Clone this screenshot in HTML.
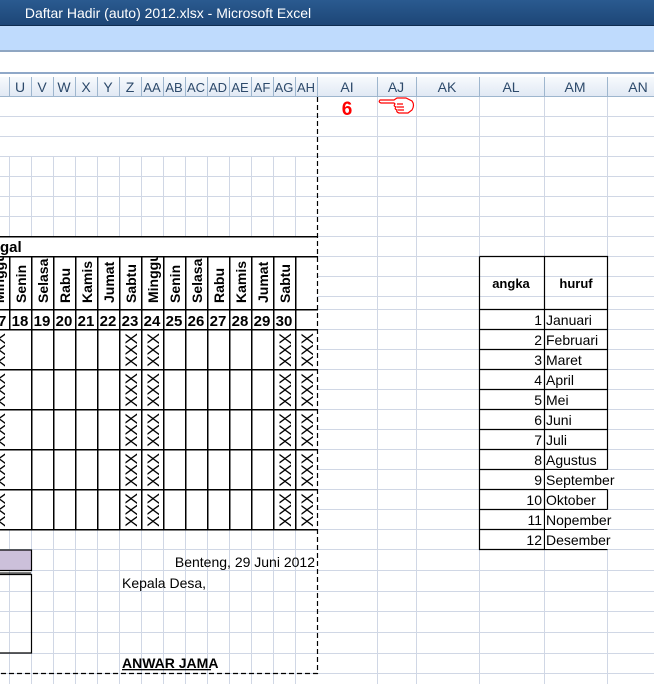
<!DOCTYPE html>
<html><head><meta charset="utf-8"><style>
html,body{margin:0;padding:0;width:654px;height:684px;overflow:hidden;background:#fff}
svg{display:block}
text{font-family:"Liberation Sans",sans-serif}
</style></head><body>
<svg width="654" height="684" viewBox="0 0 654 684" xmlns="http://www.w3.org/2000/svg">
<defs>
<linearGradient id="tb" x1="0" y1="0" x2="0" y2="1"><stop offset="0" stop-color="#2a5a90"/><stop offset="1" stop-color="#1d4677"/></linearGradient>
<linearGradient id="hd" x1="0" y1="0" x2="0" y2="1"><stop offset="0" stop-color="#f7fafd"/><stop offset="1" stop-color="#e1e9f4"/></linearGradient>
<clipPath id="hc"><rect x="0" y="257" width="317" height="52"/></clipPath>
</defs>
<rect x="0" y="0" width="654" height="25" fill="url(#tb)"/>
<text x="168" y="18" font-size="14" fill="#fff" text-anchor="middle">Daftar Hadir (auto) 2012.xlsx -  Microsoft Excel</text>
<rect x="0" y="25" width="654" height="1" fill="#0f2c50"/>
<rect x="0" y="26" width="654" height="24" fill="#bfdbfd"/>
<rect x="0" y="50" width="654" height="2" fill="#8fa6c2"/>
<rect x="0" y="72" width="654" height="2" fill="#8fa8c8"/>
<rect x="0" y="77" width="654" height="19" fill="url(#hd)"/>
<rect x="0" y="96" width="654" height="1" fill="#9eb6ce"/>
<g fill="#9eb6ce">
<rect x="9" y="77" width="1" height="19"/><rect x="31" y="77" width="1" height="19"/><rect x="53" y="77" width="1" height="19"/><rect x="75" y="77" width="1" height="19"/><rect x="97" y="77" width="1" height="19"/><rect x="119" y="77" width="1" height="19"/><rect x="141" y="77" width="1" height="19"/><rect x="163" y="77" width="1" height="19"/><rect x="185" y="77" width="1" height="19"/><rect x="207" y="77" width="1" height="19"/><rect x="229" y="77" width="1" height="19"/><rect x="251" y="77" width="1" height="19"/><rect x="273" y="77" width="1" height="19"/><rect x="295" y="77" width="1" height="19"/><rect x="317" y="77" width="1" height="19"/><rect x="377" y="77" width="1" height="19"/><rect x="416" y="77" width="1" height="19"/><rect x="479" y="77" width="1" height="19"/><rect x="544" y="77" width="1" height="19"/><rect x="607" y="77" width="1" height="19"/>
</g>
<g font-size="14" fill="#2d4a6b" text-anchor="middle">
<text x="20" y="92">U</text><text x="42" y="92">V</text><text x="64" y="92">W</text><text x="86" y="92">X</text><text x="108" y="92">Y</text><text x="130" y="92">Z</text><text x="152" y="92" font-size="13">AA</text><text x="174" y="92" font-size="13">AB</text><text x="196" y="92" font-size="13">AC</text><text x="218" y="92" font-size="13">AD</text><text x="240" y="92" font-size="13">AE</text><text x="262" y="92" font-size="13">AF</text><text x="284" y="92" font-size="13">AG</text><text x="306" y="92" font-size="13">AH</text><text x="347" y="92">AI</text><text x="396" y="92">AJ</text><text x="447" y="92">AK</text><text x="511" y="92">AL</text><text x="575" y="92">AM</text><text x="638" y="92">AN</text>
</g>
<g fill="#d0d7e5">
<rect x="0" y="116" width="654" height="1"/><rect x="0" y="136" width="654" height="1"/><rect x="0" y="156" width="654" height="1"/><rect x="0" y="176" width="654" height="1"/><rect x="0" y="196" width="654" height="1"/><rect x="0" y="216" width="654" height="1"/><rect x="0" y="236" width="654" height="1"/>
<rect x="317" y="256" width="337" height="1"/><rect x="317" y="276" width="337" height="1"/><rect x="317" y="296" width="337" height="1"/>
<rect x="317" y="309" width="337" height="1"/><rect x="317" y="329" width="337" height="1"/><rect x="317" y="349" width="337" height="1"/><rect x="317" y="369" width="337" height="1"/><rect x="317" y="389" width="337" height="1"/><rect x="317" y="409" width="337" height="1"/><rect x="317" y="429" width="337" height="1"/><rect x="317" y="449" width="337" height="1"/><rect x="317" y="469" width="337" height="1"/><rect x="317" y="489" width="337" height="1"/><rect x="317" y="509" width="337" height="1"/><rect x="317" y="529" width="337" height="1"/>
<rect x="0" y="549" width="654" height="1"/><rect x="0" y="570" width="654" height="1"/><rect x="0" y="591" width="654" height="1"/><rect x="0" y="611" width="654" height="1"/><rect x="0" y="632" width="654" height="1"/><rect x="0" y="653" width="654" height="1"/><rect x="0" y="673" width="654" height="1"/>
<rect x="9" y="156" width="1" height="80"/><rect x="31" y="156" width="1" height="80"/><rect x="53" y="156" width="1" height="80"/><rect x="75" y="156" width="1" height="80"/><rect x="97" y="156" width="1" height="80"/><rect x="119" y="156" width="1" height="80"/><rect x="141" y="156" width="1" height="80"/><rect x="163" y="156" width="1" height="80"/><rect x="185" y="156" width="1" height="80"/><rect x="207" y="156" width="1" height="80"/><rect x="229" y="156" width="1" height="80"/><rect x="251" y="156" width="1" height="80"/><rect x="273" y="156" width="1" height="80"/><rect x="295" y="156" width="1" height="80"/>
<rect x="9" y="529" width="1" height="155"/><rect x="31" y="529" width="1" height="155"/><rect x="53" y="529" width="1" height="155"/><rect x="75" y="529" width="1" height="155"/><rect x="97" y="529" width="1" height="155"/><rect x="119" y="529" width="1" height="155"/><rect x="141" y="529" width="1" height="155"/><rect x="163" y="529" width="1" height="155"/><rect x="185" y="529" width="1" height="155"/><rect x="207" y="529" width="1" height="155"/><rect x="229" y="529" width="1" height="155"/><rect x="251" y="529" width="1" height="155"/><rect x="273" y="529" width="1" height="155"/><rect x="295" y="529" width="1" height="155"/>
<rect x="377" y="97" width="1" height="587"/><rect x="416" y="97" width="1" height="587"/><rect x="479" y="97" width="1" height="587"/><rect x="544" y="97" width="1" height="587"/><rect x="607" y="97" width="1" height="587"/>
</g>
<g fill="#000">
<rect x="0" y="236" width="318" height="1.5"/>
<rect x="0" y="256" width="318" height="1.5"/>
<rect x="0" y="309" width="318" height="1.5"/>
<rect x="0" y="329" width="318" height="1.5"/>
<rect x="0" y="369" width="318" height="1.5"/>
<rect x="0" y="409" width="318" height="1.5"/>
<rect x="0" y="449" width="318" height="1.5"/>
<rect x="0" y="489" width="318" height="1.5"/>
<rect x="0" y="529" width="318" height="1.5"/>
<rect x="9" y="256" width="1.5" height="74"/>
<rect x="31" y="256" width="1.5" height="274"/><rect x="53" y="256" width="1.5" height="274"/><rect x="75" y="256" width="1.5" height="274"/><rect x="97" y="256" width="1.5" height="274"/><rect x="119" y="256" width="1.5" height="274"/><rect x="141" y="256" width="1.5" height="274"/><rect x="163" y="256" width="1.5" height="274"/><rect x="185" y="256" width="1.5" height="274"/><rect x="207" y="256" width="1.5" height="274"/><rect x="229" y="256" width="1.5" height="274"/><rect x="251" y="256" width="1.5" height="274"/><rect x="273" y="256" width="1.5" height="274"/><rect x="295" y="256" width="1.5" height="274"/>
</g>
<text x="0" y="252" font-size="15" font-weight="bold">gal</text>
<g clip-path="url(#hc)" font-size="14" font-weight="bold">
<text transform="translate(4,303) rotate(-90)">Minggu</text>
<text transform="translate(26,303) rotate(-90)">Senin</text>
<text transform="translate(48,303) rotate(-90)">Selasa</text>
<text transform="translate(70,303) rotate(-90)">Rabu</text>
<text transform="translate(92,303) rotate(-90)">Kamis</text>
<text transform="translate(114,303) rotate(-90)">Jumat</text>
<text transform="translate(136,303) rotate(-90)">Sabtu</text>
<text transform="translate(158,303) rotate(-90)">Minggu</text>
<text transform="translate(180,303) rotate(-90)">Senin</text>
<text transform="translate(202,303) rotate(-90)">Selasa</text>
<text transform="translate(224,303) rotate(-90)">Rabu</text>
<text transform="translate(246,303) rotate(-90)">Kamis</text>
<text transform="translate(268,303) rotate(-90)">Jumat</text>
<text transform="translate(290,303) rotate(-90)">Sabtu</text>
</g>
<g font-size="15" font-weight="bold" text-anchor="middle">
<text x="-2" y="326">17</text><text x="20" y="326">18</text><text x="42" y="326">19</text><text x="64" y="326">20</text><text x="86" y="326">21</text><text x="108" y="326">22</text><text x="130" y="326">23</text><text x="152" y="326">24</text><text x="174" y="326">25</text><text x="196" y="326">26</text><text x="218" y="326">27</text><text x="240" y="326">28</text><text x="262" y="326">29</text><text x="284" y="326">30</text>
</g>
<g font-size="17">
<text transform="translate(5,367) rotate(-90)">XXX</text><text transform="translate(137,367) rotate(-90)">XXX</text><text transform="translate(159,367) rotate(-90)">XXX</text><text transform="translate(291,367) rotate(-90)">XXX</text><text transform="translate(313,367) rotate(-90)">XXX</text>
<text transform="translate(5,407) rotate(-90)">XXX</text><text transform="translate(137,407) rotate(-90)">XXX</text><text transform="translate(159,407) rotate(-90)">XXX</text><text transform="translate(291,407) rotate(-90)">XXX</text><text transform="translate(313,407) rotate(-90)">XXX</text>
<text transform="translate(5,447) rotate(-90)">XXX</text><text transform="translate(137,447) rotate(-90)">XXX</text><text transform="translate(159,447) rotate(-90)">XXX</text><text transform="translate(291,447) rotate(-90)">XXX</text><text transform="translate(313,447) rotate(-90)">XXX</text>
<text transform="translate(5,487) rotate(-90)">XXX</text><text transform="translate(137,487) rotate(-90)">XXX</text><text transform="translate(159,487) rotate(-90)">XXX</text><text transform="translate(291,487) rotate(-90)">XXX</text><text transform="translate(313,487) rotate(-90)">XXX</text>
<text transform="translate(5,527) rotate(-90)">XXX</text><text transform="translate(137,527) rotate(-90)">XXX</text><text transform="translate(159,527) rotate(-90)">XXX</text><text transform="translate(291,527) rotate(-90)">XXX</text><text transform="translate(313,527) rotate(-90)">XXX</text>
</g>
<rect x="-2" y="550" width="33.5" height="20.5" fill="#ccc0da" stroke="#000" stroke-width="1.2"/>
<rect x="0" y="572.5" width="31" height="1" fill="#000"/>
<path d="M0 574.5 H31.5 V653 H0" fill="none" stroke="#000" stroke-width="1.2"/>
<text x="315" y="567" font-size="14" text-anchor="end">Benteng, 29 Juni 2012</text>
<text x="122" y="588" font-size="14">Kepala Desa,</text>
<text x="122" y="668" font-size="14" font-weight="bold">ANWAR JAMA</text>
<rect x="122" y="669" width="89" height="1.3" fill="#000"/>
<path d="M317.5 97 V673.5 H0" fill="none" stroke="#000" stroke-width="1.2" stroke-dasharray="5,3"/>
<text x="347" y="115" font-size="19" font-weight="bold" fill="#f00" text-anchor="middle">6</text>
<path d="M380 100 H394 L397 98 H406 L412 101 Q415 105 412 110 L408 113 H399 Q396 112 397 110 Q394 109 396 107 Q393 106 395 104 L394 103 H381 Q378 102 380 100 Z M397 104 H403 M397 107 H404 M398 110 H404" fill="none" stroke="#f00" stroke-width="1.2"/>
<g fill="none" stroke="#000" stroke-width="1.2">
<path d="M479.5 256.5 H607.5 V469.5 M607.5 489.5 V509.5 M479.5 256.5 V549.5 H607.5 M544.5 256.5 V549.5"/>
<path d="M479.5 309.5 H607.5 M479.5 329.5 H607.5 M479.5 349.5 H607.5 M479.5 369.5 H607.5 M479.5 389.5 H607.5 M479.5 409.5 H607.5 M479.5 429.5 H607.5 M479.5 449.5 H607.5 M479.5 469.5 H607.5 M479.5 489.5 H607.5 M479.5 509.5 H607.5 M479.5 529.5 H607.5"/>
</g>
<rect x="545" y="470" width="70" height="19" fill="#fff"/>
<rect x="545" y="510" width="70" height="19" fill="#fff"/>
<rect x="545" y="530" width="70" height="19" fill="#fff"/>
<text x="511" y="288" font-size="13" font-weight="bold" text-anchor="middle">angka</text>
<text x="576" y="288" font-size="13" font-weight="bold" text-anchor="middle">huruf</text>
<g font-size="14" text-anchor="end">
<text x="542" y="325">1</text><text x="542" y="345">2</text><text x="542" y="365">3</text><text x="542" y="385">4</text><text x="542" y="405">5</text><text x="542" y="425">6</text><text x="542" y="445">7</text><text x="542" y="465">8</text><text x="542" y="485">9</text><text x="542" y="505">10</text><text x="542" y="525">11</text><text x="542" y="545">12</text>
</g>
<g font-size="14">
<text x="546" y="325">Januari</text><text x="546" y="345">Februari</text><text x="546" y="365">Maret</text><text x="546" y="385">April</text><text x="546" y="405">Mei</text><text x="546" y="425">Juni</text><text x="546" y="445">Juli</text><text x="546" y="465">Agustus</text><text x="546" y="485">September</text><text x="546" y="505">Oktober</text><text x="546" y="525">Nopember</text><text x="546" y="545">Desember</text>
</g>
</svg>
</body></html>
